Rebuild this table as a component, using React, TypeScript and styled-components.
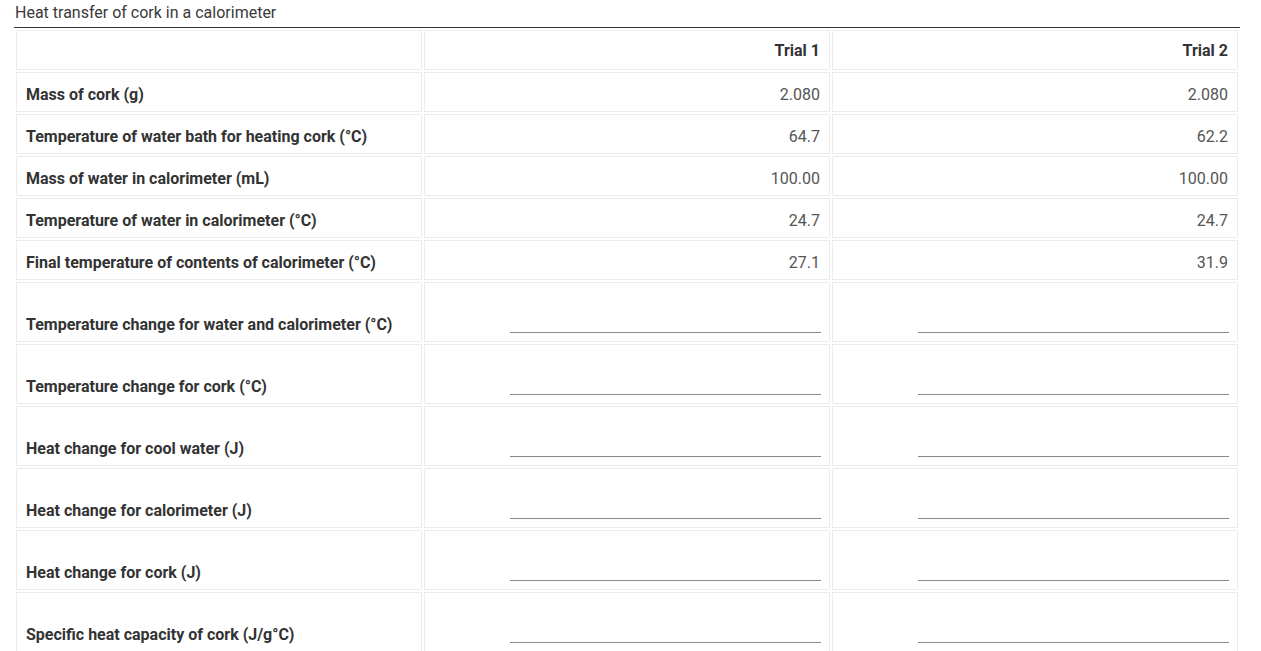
import * as React from 'react';
import styled, { createGlobalStyle } from 'styled-components';

const measured = [
  { label: 'Mass of cork (g)', t1: '2.080', t2: '2.080' },
  { label: 'Temperature of water bath for heating cork (°C)', t1: '64.7', t2: '62.2' },
  { label: 'Mass of water in calorimeter (mL)', t1: '100.00', t2: '100.00' },
  { label: 'Temperature of water in calorimeter (°C)', t1: '24.7', t2: '24.7' },
  { label: 'Final temperature of contents of calorimeter (°C)', t1: '27.1', t2: '31.9' },
];

const calculated = [
  'Temperature change for water and calorimeter (°C)',
  'Temperature change for cork (°C)',
  'Heat change for cool water (J)',
  'Heat change for calorimeter (J)',
  'Heat change for cork (J)',
  'Specific heat capacity of cork (J/g°C)',
];

const GlobalStyle = createGlobalStyle`
  body {
    margin: 0;
    background: #fff;
    font-family: Roboto, "Liberation Sans", Arial, sans-serif;
    color: #333;
  }
`;

const App: React.FC = () => (
  <Page>
    <GlobalStyle />
    <Title>Heat transfer of cork in a calorimeter</Title>
    <Table>
      <colgroup>
        <col width="33.33%" />
        <col width="33.33%" />
        <col width="33.33%" />
      </colgroup>
      <tbody>
        <tr>
          <Cell />
          <HeadCell>Trial 1</HeadCell>
          <HeadCell>Trial 2</HeadCell>
        </tr>
        {measured.map((row) => (
          <tr key={row.label}>
            <LabelCell>{row.label}</LabelCell>
            <ValueCell>{row.t1}</ValueCell>
            <ValueCell>{row.t2}</ValueCell>
          </tr>
        ))}
        {calculated.map((label) => (
          <tr key={label}>
            <LabelCell tall>{label}</LabelCell>
            <ValueCell tall>
              <Answer type="text" />
            </ValueCell>
            <ValueCell tall>
              <Answer type="text" />
            </ValueCell>
          </tr>
        ))}
      </tbody>
    </Table>
  </Page>
);

const Page = styled.div`
  padding: 3px 21px 0 14px;
`;

const Title = styled.div`
  font-size: 16px;
  line-height: 20px;
  font-weight: 400;
  color: #3a3a3a;
  padding: 0 0 4px 1px;
  border-bottom: 1px solid #333;
`;

const Table = styled.table`
  width: 100%;
  table-layout: fixed;
  border-collapse: separate;
  border-spacing: 2px;
`;

const Cell = styled.td<{ tall?: boolean }>`
  border: 1px solid #ececec;
  font-size: 16px;
  line-height: 20px;
  box-sizing: border-box;
  height: ${(p) => (p.tall ? 60 : 40)}px;
  padding: ${(p) => (p.tall ? '0 8px 8px 9px' : '5px 9px 0 9px')};
  vertical-align: ${(p) => (p.tall ? 'bottom' : 'middle')};
`;

const HeadCell = styled(Cell)`
  font-weight: 700;
  text-align: right;
  color: #333;
  padding-top: 2px;
`;

const LabelCell = styled(Cell)`
  font-weight: 700;
  color: #333;
  padding-left: 9px;
  ${(p) => (p.tall ? 'padding-bottom: 6px;' : '')}
`;

const ValueCell = styled(Cell)`
  text-align: right;
  color: #555;
`;

const Answer = styled.input`
  display: inline-block;
  width: 311px;
  height: 24px;
  box-sizing: border-box;
  border: none;
  border-bottom: 1px solid #8a8a8a;
  background: transparent;
  outline: none;
  padding: 0;
  font: inherit;
  vertical-align: bottom;
`;

export default App;
